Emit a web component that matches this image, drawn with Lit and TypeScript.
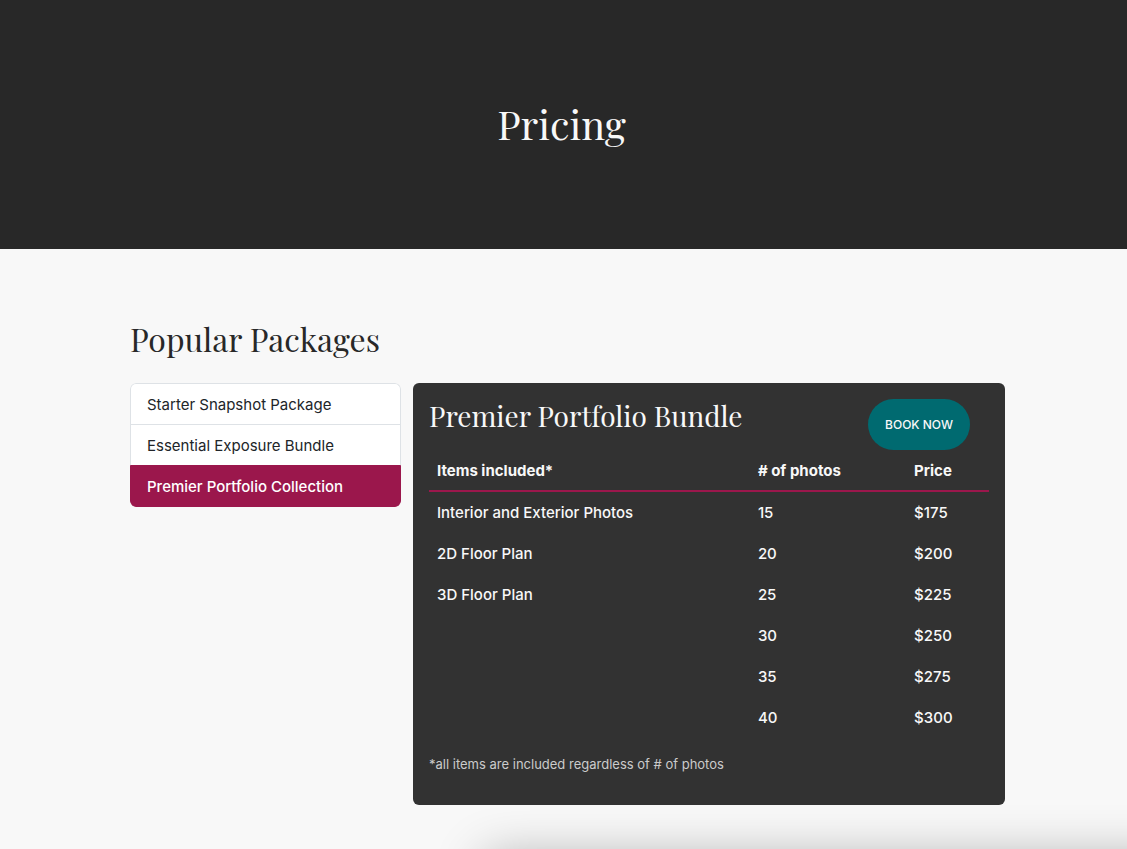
import { LitElement, html, css } from "lit";
import { customElement, state } from "lit/decorators.js";

interface PricePackage {
  name: string;
  title: string;
  items: string[];
  tiers: { photos: number; price: number }[];
}

const TIERS = [
  { photos: 15, price: 175 },
  { photos: 20, price: 200 },
  { photos: 25, price: 225 },
  { photos: 30, price: 250 },
  { photos: 35, price: 275 },
  { photos: 40, price: 300 },
];

const PACKAGES: PricePackage[] = [
  { name: "Starter Snapshot Package", title: "Starter Snapshot Package", items: ["Interior and Exterior Photos"], tiers: TIERS },
  { name: "Essential Exposure Bundle", title: "Essential Exposure Bundle", items: ["Interior and Exterior Photos", "2D Floor Plan"], tiers: TIERS },
  { name: "Premier Portfolio Collection", title: "Premier Portfolio Bundle", items: ["Interior and Exterior Photos", "2D Floor Plan", "3D Floor Plan"], tiers: TIERS },
];

@customElement("app-root")
export class AppRoot extends LitElement {
  @state() private selected = 2;

  static styles = css`
    :host {
      display: block;
      position: relative;
      min-height: 100vh;
      overflow: hidden;
      background: #f8f8f8;
      color: #212529;
      font: 400 15px/24px Inter, "Liberation Sans", sans-serif;
    }
    * { box-sizing: border-box; }
    h1, h2, h3, p { margin: 0; }
    h1, h2, h3 {
      font-family: "Playfair Display", "Liberation Serif", serif;
      font-weight: 400;
    }
    .hero {
      padding: 100px 4px 101px 0;
      background: #282828;
      color: #f8f8f8;
      text-align: center;
    }
    .hero-title { font-size: 40px; line-height: 48px; }
    .content { padding: 71px 122px 44px 130px; }
    .heading {
      margin-bottom: 25px;
      color: #282828;
      font-size: 32px;
      line-height: 38px;
    }
    .columns {
      display: grid;
      grid-template-columns: 271fr 592fr;
      gap: 12px;
      align-items: start;
    }
    .list {
      display: flex;
      flex-direction: column;
      border-radius: 6px;
      overflow: hidden;
    }
    .option {
      padding: 9px 16px 7px;
      border: 1px solid #dee2e6;
      border-bottom-width: 0;
      background: #fff;
      color: #212529;
      font: inherit;
      text-align: left;
      cursor: pointer;
    }
    .option:first-child { border-radius: 6px 6px 0 0; }
    .option:last-child {
      border-bottom-width: 1px;
      border-radius: 0 0 6px 6px;
    }
    .option[aria-pressed="true"] {
      border-color: #9b174c;
      background: #9b174c;
      color: #fff;
      font-weight: 500;
    }
    .card {
      padding: 16px 16px 31px;
      border-radius: 6px;
      background: #323232;
      color: #f8f8f8;
    }
    .card-head {
      display: flex;
      justify-content: space-between;
      align-items: flex-start;
      padding-right: 19px;
    }
    .card-title { font-size: 28px; line-height: 34px; }
    .book {
      flex: none;
      padding: 16px 17px;
      border: 0;
      border-radius: 26px;
      background: #006a70;
      color: #f8f8f8;
      font: 500 12px/19px Inter, sans-serif;
      text-transform: uppercase;
      cursor: pointer;
    }
    .prices {
      width: 100%;
      table-layout: fixed;
      border-collapse: separate;
      border-spacing: 0;
      font-weight: 500;
      text-align: left;
    }
    .col-items { width: 57.3%; }
    .col-photos { width: 27.9%; }
    .prices th { padding: 9px 8px 7px; border-bottom: 2px solid #9b174c; font-weight: 700; }
    .prices td { height: 41px; padding: 8px; }
    .note {
      margin-top: 16px;
      color: #cbcbcb;
      font-size: 13px;
      line-height: 20px;
    }
    .shade {
      position: absolute;
      top: 100%;
      left: 43%;
      right: -60px;
      height: 80px;
      margin-top: 8px;
      box-shadow: 0 0 50px rgba(0, 0, 0, 0.3);
    }
  `;

  render() {
    const pack = PACKAGES[this.selected];
    return html`
      <header class="hero"><h1 class="hero-title">Pricing</h1></header>
      <main class="content">
        <h2 class="heading">Popular Packages</h2>
        <div class="columns">
          <div class="list" role="group" aria-label="Packages">
            ${PACKAGES.map(
              (p, i) => html`<button
                class="option"
                type="button"
                aria-pressed=${i === this.selected ? "true" : "false"}
                @click=${() => (this.selected = i)}
              >${p.name}</button>`
            )}
          </div>
          <section class="card">
            <div class="card-head">
              <h3 class="card-title">${pack.title}</h3>
              <button class="book" type="button">Book now</button>
            </div>
            <table class="prices">
              <colgroup><col class="col-items" /><col class="col-photos" /><col /></colgroup>
              <thead>
                <tr>
                  <th scope="col">Items included*</th>
                  <th scope="col"># of photos</th>
                  <th scope="col">Price</th>
                </tr>
              </thead>
              <tbody>
                ${pack.tiers.map(
                  (t, i) => html`<tr>
                    <td>${pack.items[i] ?? ""}</td>
                    <td>${t.photos}</td>
                    <td>$${t.price}</td>
                  </tr>`
                )}
              </tbody>
            </table>
            <p class="note">*all items are included regardless of # of photos</p>
          </section>
        </div>
      </main>
      <div class="shade" aria-hidden="true"></div>
    `;
  }
}
